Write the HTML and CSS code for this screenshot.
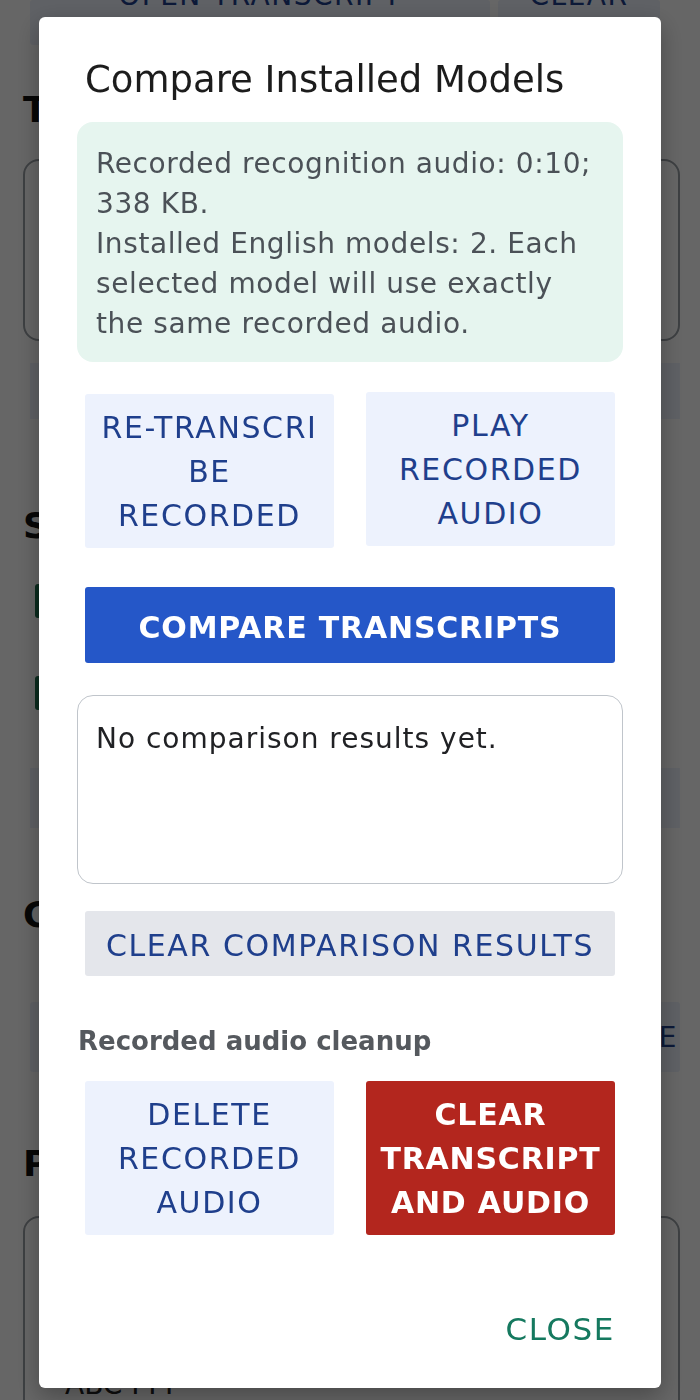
FILE: index.html
```html
<!DOCTYPE html>
<html lang="en">
<head>
<meta charset="utf-8">
<title>Compare Installed Models</title>
<link rel="stylesheet" href="styles.css">
</head>
<body>
<div class="page">
  <div class="top-actions">
    <div class="bg-btn wide"><span class="peek">OPEN TRANSCRIPT</span></div>
    <div class="bg-btn narrow"><span class="peek">CLEAR</span></div>
  </div>
  <h2 class="bg-heading h-t">Transcript</h2>
  <div class="bg-box box-1"></div>
  <div class="bg-strip strip-1"></div>
  <h2 class="bg-heading h-s">Speech models</h2>
  <div class="bg-check c-1"></div>
  <div class="bg-check c-2"></div>
  <div class="bg-strip strip-2"></div>
  <h2 class="bg-heading h-c">Compare</h2>
  <div class="bg-btn full">COMPARE MODELS ARE</div>
  <h2 class="bg-heading h-p">Phrases</h2>
  <div class="bg-box box-2"><span class="bg-box-text">ABC PPP</span></div>
</div>

<div class="overlay"></div>

<div class="dialog" role="dialog">
  <h1 class="dialog-title">Compare Installed Models</h1>
  <div class="info-box">
    <p>Recorded recognition audio: 0:10; 338 KB.</p>
    <p>Installed English models: 2. Each selected model will use exactly the same recorded audio.</p>
  </div>
  <div class="btn-row row-top">
    <button class="btn light">RE-TRANSCRI<br>BE<br>RECORDED</button>
    <button class="btn light raised">PLAY<br>RECORDED<br>AUDIO</button>
  </div>
  <div class="inset">
    <button class="btn primary">COMPARE TRANSCRIPTS</button>
  </div>
  <div class="results-box">No comparison results yet.</div>
  <div class="inset">
    <button class="btn grey">CLEAR COMPARISON RESULTS</button>
  </div>
  <div class="section-label">Recorded audio cleanup</div>
  <div class="btn-row row-bottom">
    <button class="btn light">DELETE<br>RECORDED<br>AUDIO</button>
    <button class="btn danger">CLEAR<br>TRANSCRIPT<br>AND AUDIO</button>
  </div>
  <div class="dialog-actions">
    <button class="text-btn">CLOSE</button>
  </div>
</div>
</body>
</html>
```

FILE: styles.css
```css
* { box-sizing: border-box; }
html, body { margin: 0; padding: 0; }
body {
  width: 700px;
  height: 1400px;
  overflow: hidden;
  background: #ffffff;
  font-family: "DejaVu Sans", "Noto Sans", sans-serif;
}

/* ---------- background page ---------- */
.page {
  display: flex;
  flex-direction: column;
  padding: 0 20px 0 23px;
  height: 1400px;
  overflow: hidden;
}
.top-actions {
  display: flex;
  margin-left: 7px;
  margin-right: 20px;
  height: 45px;
  flex-shrink: 0;
}
.bg-btn {
  background: #edf2fc;
  color: #1f3f8c;
  font-size: 28px;
  letter-spacing: 1.5px;
  display: flex;
  justify-content: center;
  border-radius: 3px;
  overflow: hidden;
}
.peek { line-height: 30px; margin-top: -19px; }
.bg-btn.wide { width: 460px; }
.bg-btn.narrow { flex: 1; margin-left: 8px; }
.bg-heading {
  margin: 0;
  font-size: 36px;
  font-weight: 700;
  color: #111;
  line-height: 44px;
  flex-shrink: 0;
}
.h-t { margin-top: 43px; }
.bg-box {
  border: 2px solid #9aa0a6;
  border-radius: 16px;
  height: 182px;
  margin-top: 27px;
  flex-shrink: 0;
}
.bg-strip {
  background: #edf2fc;
  margin-left: 7px;
  height: 56px;
  flex-shrink: 0;
}
.strip-1 { margin-top: 22px; }
.h-s { margin-top: 85px; }
.bg-check {
  width: 30px;
  height: 34px;
  margin-left: 12px;
  background: #1a6b4a;
  border-radius: 3px;
  flex-shrink: 0;
}
.c-1 { margin-top: 36px; }
.c-2 { margin-top: 58px; }
.strip-2 { margin-top: 58px; height: 60px; }
.h-c { margin-top: 65px; }
.bg-btn.full {
  margin: 65px 0 0 7px;
  height: 70px;
  align-items: center;
  justify-content: flex-end;
  padding-right: 2px;
  flex-shrink: 0;
}
.h-p { margin-top: 70px; }
.box-2 {
  margin-top: 30px;
  height: 260px;
  padding: 150px 0 0 40px;
}
.bg-box-text { font-size: 28px; color: #222; }

.overlay {
  position: fixed;
  inset: 0;
  background: rgba(0, 0, 0, 0.6);
}

/* ---------- dialog ---------- */
.dialog {
  position: fixed;
  left: 39px;
  top: 17px;
  width: 622px;
  height: 1371px;
  background: #ffffff;
  border-radius: 6px;
  padding: 39px 38px 0 38px;
  display: flex;
  flex-direction: column;
  box-shadow: 0 8px 24px rgba(0, 0, 0, 0.3);
}
.dialog-title {
  margin: 0 0 0 8px;
  font-size: 37px;
  font-weight: 400;
  line-height: 48px;
  color: #1c1c1c;
}
.info-box {
  margin-top: 18px;
  background: #e6f5ef;
  border-radius: 16px;
  padding: 22px 19px 18px;
  color: #4b5157;
  font-size: 28px;
  letter-spacing: 0.6px;
  line-height: 40px;
}
.info-box p { margin: 0; }

.btn {
  font-family: inherit;
  border: none;
  border-radius: 3px;
  font-size: 30px;
  letter-spacing: 1.6px;
  line-height: 44px;
  text-align: center;
  padding: 2px 0 0;
  cursor: pointer;
}
.btn-row {
  display: grid;
  grid-template-columns: 1fr 1fr;
  gap: 32px;
  padding: 0 8px;
}
.row-top { margin-top: 32px; }
.row-top .btn { height: 154px; }
.row-top .raised { transform: translateY(-2px); }
.row-bottom { margin-top: 24px; }
.row-bottom .btn { height: 154px; }

.light { background: #edf2fd; color: #1f3f8c; }
.danger {
  background: #b3261e;
  color: #ffffff;
  font-weight: 700;
  letter-spacing: 0.8px;
}
.inset { padding: 0 8px; }
.primary {
  width: 100%;
  margin-top: 39px;
  height: 76px;
  padding-top: 5px;
  background: #2557c8;
  color: #ffffff;
  font-weight: 700;
  letter-spacing: 0.8px;
}
.results-box {
  margin-top: 32px;
  height: 189px;
  border: 1.5px solid #c0c5cb;
  border-radius: 16px;
  padding: 23px 18px 19px;
  font-size: 28px;
  letter-spacing: 1px;
  line-height: 40px;
  color: #202124;
}
.grey {
  width: 100%;
  margin-top: 27px;
  height: 65px;
  padding-top: 4px;
  background: #e4e6eb;
  color: #1f3f8c;
}
.section-label {
  margin-top: 49px;
  padding-left: 1px;
  font-size: 26px;
  line-height: 32px;
  font-weight: 700;
  color: #55595e;
}
.dialog-actions {
  display: flex;
  justify-content: flex-end;
  margin-top: 74px;
  padding-right: 8px;
}
.text-btn {
  font-family: inherit;
  background: none;
  border: none;
  padding: 0;
  font-size: 31px;
  letter-spacing: 1.6px;
  line-height: 40px;
  color: #15795f;
}
```
